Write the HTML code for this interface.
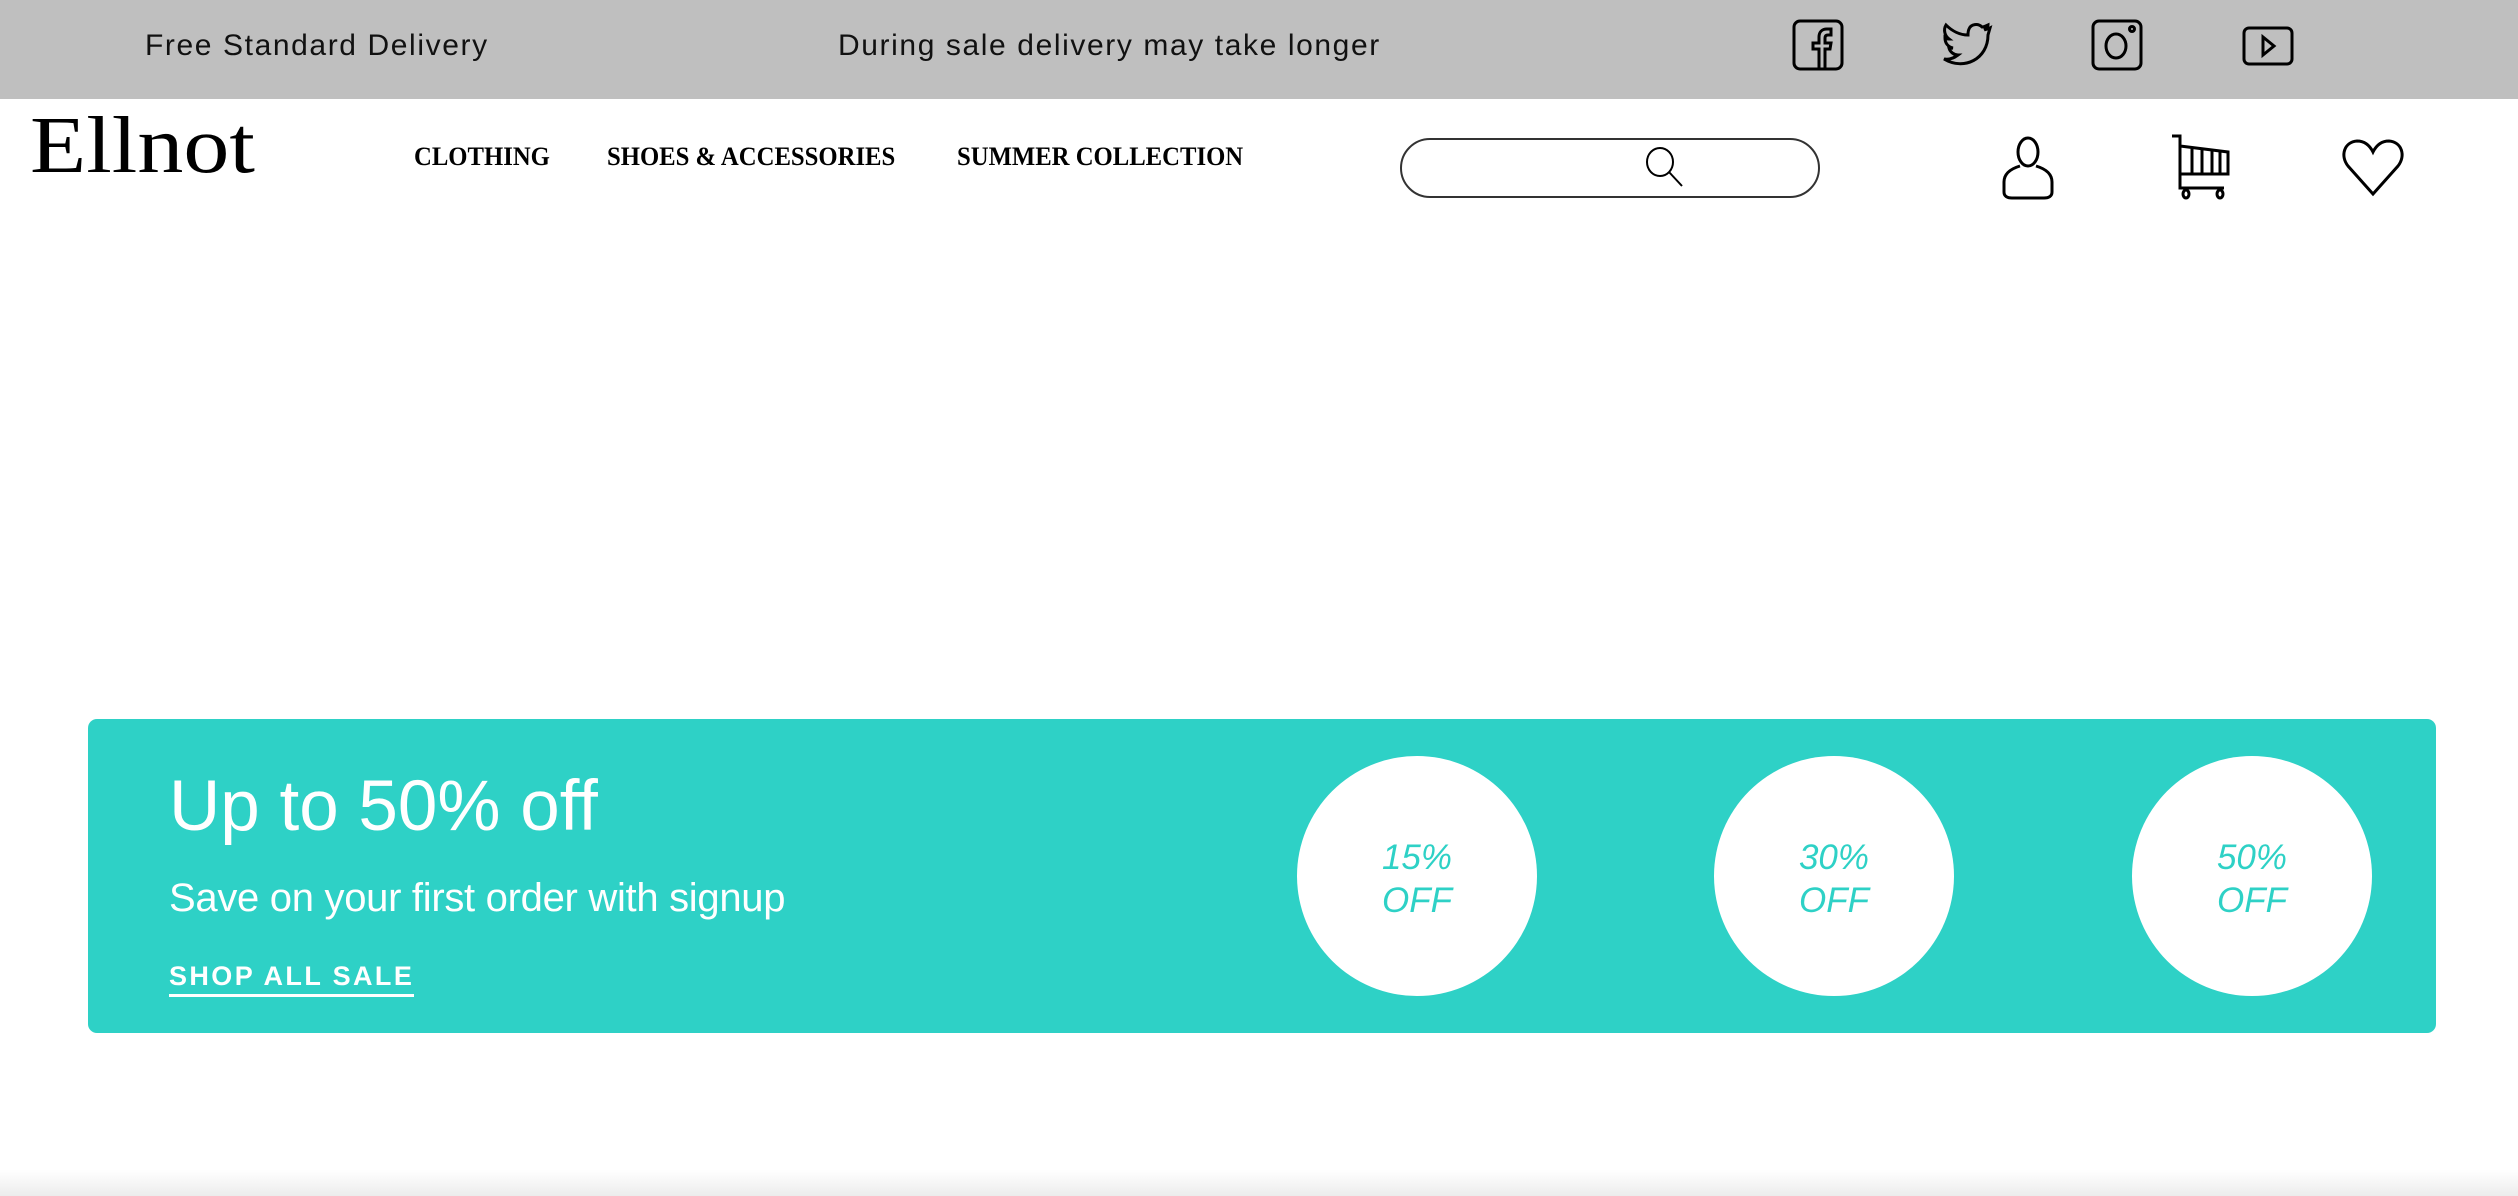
<!DOCTYPE html>
<html><head><style>
*{margin:0;padding:0;box-sizing:border-box}
body{width:2518px;height:1196px;background:#fff;position:relative;overflow:hidden;font-family:"Liberation Sans",sans-serif}
.top{position:absolute;left:0;top:0;width:2518px;height:99px;background:#bfbfbf}
.t{position:absolute;font-size:30px;color:#111;letter-spacing:1.6px;top:29px;white-space:nowrap}
.logo{position:absolute;left:30px;top:106px;font-family:"Liberation Serif",serif;font-size:80px;color:#000;line-height:1;transform:scaleX(1.15);transform-origin:left}
.nav{position:absolute;top:142px;font-family:"Liberation Serif",serif;font-weight:bold;font-size:26px;color:#000;white-space:nowrap;transform:scaleX(.95);transform-origin:left}
.search{position:absolute;left:1400px;top:138px;width:420px;height:60px;border:2px solid #333;border-radius:30px}
svg{position:absolute}
.banner{position:absolute;left:88px;top:719px;width:2348px;height:314px;background:#2ed1c6;border-radius:9px}
.h1{position:absolute;left:169px;top:766px;font-size:71px;color:#fff;font-weight:300;white-space:nowrap}
.h2{position:absolute;left:169px;top:876px;font-size:40px;color:#fff;white-space:nowrap;letter-spacing:-.3px}
.shop{position:absolute;left:169px;top:961px;font-size:27px;font-weight:bold;color:#fff;letter-spacing:2.4px;border-bottom:3px solid #fff;padding-bottom:2px;white-space:nowrap}
.c{position:absolute;top:756px;width:240px;height:240px;border-radius:50%;background:#fff;color:#2ed1c6;font-style:italic;font-size:35px;text-align:center;line-height:43px;padding-top:80px}
</style></head><body>
<div class="top"></div>
<div class="t" style="left:145px">Free Standard Delivery</div>
<div class="t" style="left:838px">During sale delivery may take longer</div>
<svg style="left:1792px;top:19px" width="52" height="52" viewBox="0 0 52 52" fill="none" stroke="#000" stroke-width="3"><rect x="2" y="2" width="48" height="48" rx="6"/><path d="M27 50V30h-6v-6h6v-6c0-5 3-8 8-8h4v6h-3c-2 0-3 1-3 3v5h6l-1 6h-5v20"/></svg>
<svg style="left:1942px;top:22px" width="52" height="46" viewBox="0 0 52 46" fill="none" stroke="#000" stroke-width="3"><path d="M48 6c-2 1-4 1-6 2 2-1 4-3 4-5-2 1-4 2-6 2-4-4-11-3-13 2-1 2-1 4-1 6C18 13 10 9 4 3c-3 5-1 11 3 14-1 0-3 0-4-1 0 5 3 9 8 10-1 0-3 1-4 0 1 4 5 7 9 7-4 3-9 5-14 4 20 12 44 0 44-24z"/></svg>
<svg style="left:2091px;top:19px" width="52" height="52" viewBox="0 0 52 52" fill="none" stroke="#000" stroke-width="3"><rect x="2" y="2" width="48" height="48" rx="6"/><ellipse cx="25" cy="27" rx="10" ry="12"/><circle cx="41" cy="10" r="2.5"/></svg>
<svg style="left:2242px;top:26px" width="52" height="40" viewBox="0 0 52 40" fill="none" stroke="#000" stroke-width="3"><rect x="2" y="2" width="48" height="36" rx="5"/><path d="M21 11l11 9-11 9z"/></svg>
<div class="logo">Ellnot</div>
<div class="nav" style="left:414px">CLOTHING</div>
<div class="nav" style="left:607px">SHOES &amp; ACCESSORIES</div>
<div class="nav" style="left:957px">SUMMER COLLECTION</div>
<div class="search"></div>
<svg style="left:1644px;top:146px" width="44" height="44" viewBox="0 0 44 44" fill="none" stroke="#000" stroke-width="2"><ellipse cx="16" cy="16" rx="13" ry="14"/><path d="M25 26l13 14"/></svg>
<svg style="left:2000px;top:136px" width="56" height="64" viewBox="0 0 56 64" fill="none" stroke="#000" stroke-width="3"><ellipse cx="28" cy="16" rx="10" ry="14"/><path d="M20 30c-10 3-16 8-16 16v10c0 4 3 6 8 6h32c5 0 8-2 8-6V46c0-8-6-13-16-16"/></svg>
<svg style="left:2170px;top:134px" width="62" height="66" viewBox="0 0 62 66" fill="none" stroke="#000" stroke-width="3"><path d="M2 2h8v52h44M10 12l48 6v22H10M22 14v26M32 15v25M42 16v24M50 17v23"/><ellipse cx="16" cy="60" rx="3" ry="4"/><ellipse cx="50" cy="60" rx="3" ry="4"/></svg>
<svg style="left:2340px;top:138px" width="66" height="60" viewBox="0 0 66 60" fill="none" stroke="#000" stroke-width="3"><path d="M33 56L8 28C0 18 4 4 17 3c8 0 13 5 16 11 3-6 8-11 16-11 13 1 17 15 9 25z"/></svg>
<div class="banner"></div>
<div class="h1">Up to 50% off</div>
<div class="h2">Save on your first order with signup</div>
<div class="shop">SHOP ALL SALE</div>
<div class="c" style="left:1297px">15%<br>OFF</div>
<div class="c" style="left:1714px">30%<br>OFF</div>
<div class="c" style="left:2132px">50%<br>OFF</div>
<div style="position:absolute;left:0;top:1170px;width:2518px;height:26px;background:linear-gradient(#fff,#ececec)"></div>
</body></html>
